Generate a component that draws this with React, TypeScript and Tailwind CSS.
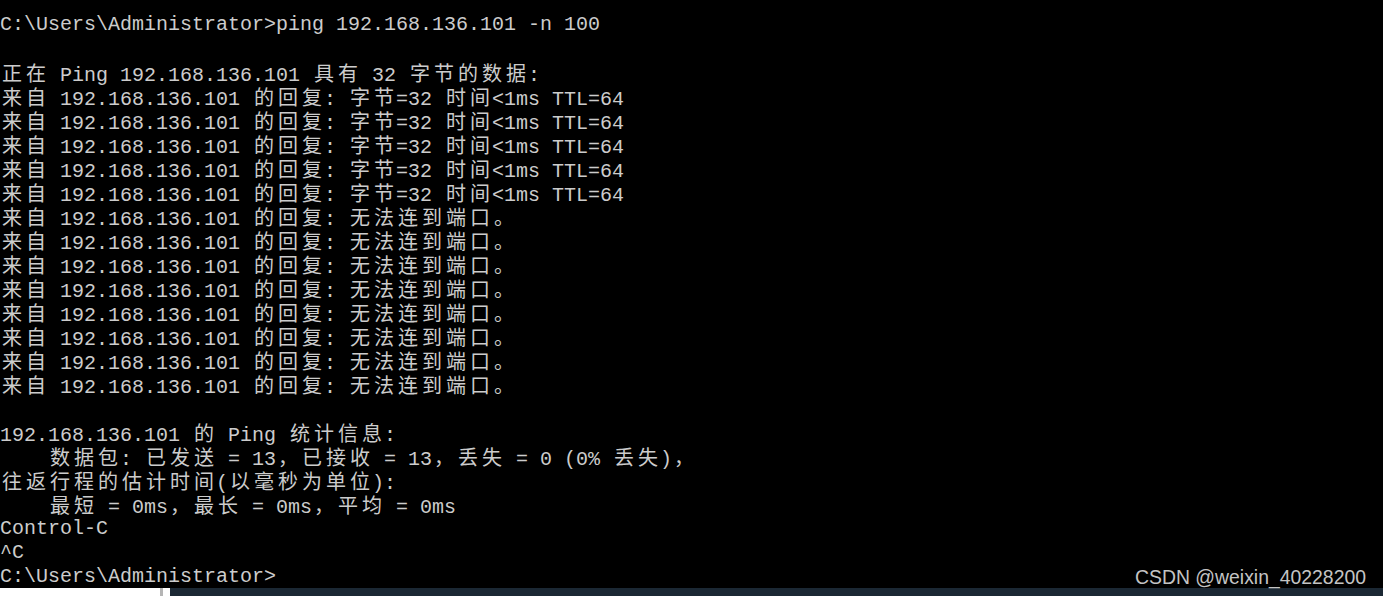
import React from "react";

const lines: string[] = [
  "C:\\Users\\Administrator>ping 192.168.136.101 -n 100",
  "",
  "正在 Ping 192.168.136.101 具有 32 字节的数据:",
  ...Array(5).fill("来自 192.168.136.101 的回复: 字节=32 时间<1ms TTL=64"),
  ...Array(8).fill("来自 192.168.136.101 的回复: 无法连到端口。"),
  "",
  "192.168.136.101 的 Ping 统计信息:",
  "    数据包: 已发送 = 13，已接收 = 13，丢失 = 0 (0% 丢失)，",
  "往返行程的估计时间(以毫秒为单位):",
  "    最短 = 0ms，最长 = 0ms，平均 = 0ms",
  "Control-C",
  "^C",
  "C:\\Users\\Administrator>",
];

const isWide = (c: string) => c.charCodeAt(0) > 0x2e80;

// split a line into ascii / cjk runs so that wide chars take two cells
const runs = (text: string) => {
  const out: { wide: boolean; t: string }[] = [];
  for (const c of text) {
    const w = isWide(c);
    const last = out[out.length - 1];
    if (last && last.wide === w) last.t += c;
    else out.push({ wide: w, t: c });
  }
  return out;
};

const Line = ({ text }: { text: string }) => (
  <div className="h-[24px] leading-[24px] whitespace-pre">
    {runs(text).map((r, i) =>
      r.wide ? (
        <span key={i} className="font-['Noto_Sans_CJK_SC',sans-serif]">
          {Array.from(r.t).map((c, j) => (
            <span key={j} className="inline-block w-[24px] text-center">
              {c}
            </span>
          ))}
        </span>
      ) : (
        <span key={i}>{r.t}</span>
      )
    )}
  </div>
);

export default function App() {
  return (
    <div className="w-[1383px] h-[596px] bg-black flex flex-col overflow-hidden relative">
      {/* console */}
      <div className="h-[588px] pt-[13px] overflow-hidden text-[20px] text-[#cccccc] font-['Liberation_Mono','Noto_Sans_CJK_SC',monospace]">
        {lines.map((l, i) => (
          <Line key={i} text={l} />
        ))}
      </div>
      {/* taskbar strip */}
      <div className="h-[8px] flex">
        <div className="w-[160px] bg-white" />
        <div className="w-[3px] bg-[#b5b5b5]" />
        <div className="w-[7px] bg-white" />
        <div className="flex-1 bg-[#1b2834]" />
      </div>
      {/* watermark */}
      <div className="absolute right-[17px] top-[565px] text-[19.4px] leading-[24px] text-[#c4c4c4] font-['Liberation_Sans',sans-serif]">
        CSDN @weixin_40228200
      </div>
    </div>
  );
}
